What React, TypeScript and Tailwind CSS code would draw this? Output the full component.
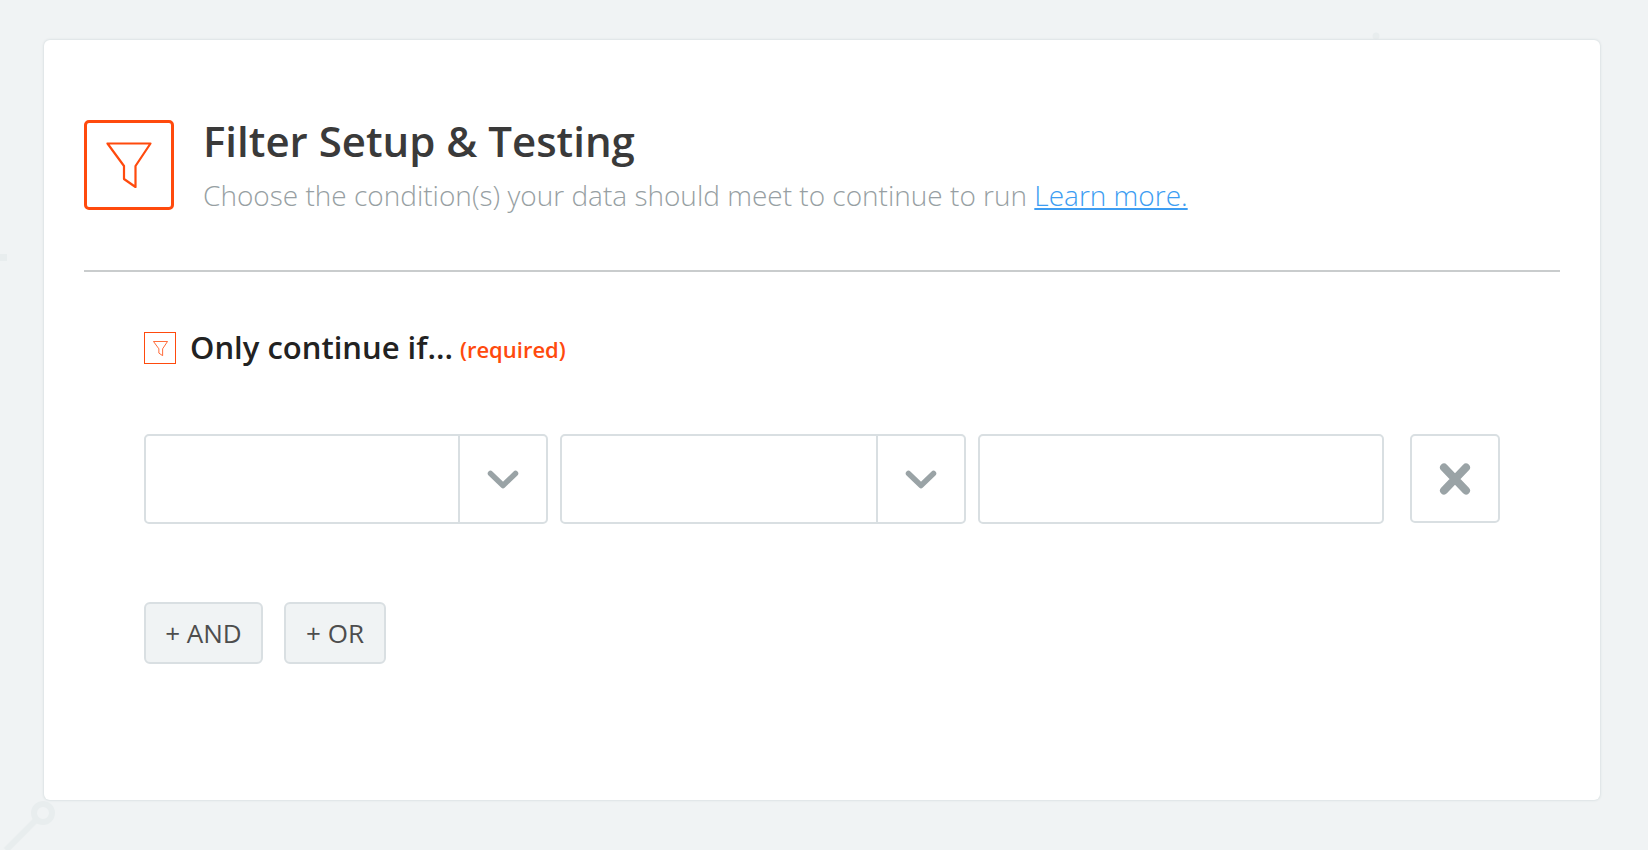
import * as React from 'react';

function FunnelIcon({ className, strokeWidth = 2 }: { className?: string; strokeWidth?: number }) {
    return (
        <svg viewBox="0 0 46 46" fill="none" className={className}>
            <path
                d="M1.5 1.5H44.5L29.5 24V45L18 37V24Z"
                stroke="currentColor"
                strokeWidth={strokeWidth}
                strokeLinejoin="round"
            />
        </svg>
    );
}

function SelectBox({ width }: { width: string }) {
    return (
        <div className={`flex h-[90px] rounded-[5px] border-2 border-[#d9dfe2] bg-white ${width}`}>
            <div className="flex-1 border-r-2 border-[#d9dfe2]" />
            <div className="flex w-[86px] items-center justify-center">
                <svg viewBox="0 0 32 20" fill="none" className="mt-0.5 h-[20px] w-[32px] text-[#9aa3a6]">
                    <path d="M3.5 3.5L16 15.5L28.5 3.5" stroke="currentColor" strokeWidth="5.5" strokeLinecap="round" strokeLinejoin="round" />
                </svg>
            </div>
        </div>
    );
}

function AddButton({ label, width }: { label: string; width: string }) {
    return (
        <button className={`h-[62px] rounded-[6px] border-2 border-[#d9dfe2] bg-[#f0f3f4] text-[26px] text-[#4d4d4d] ${width}`}>
            {label}
        </button>
    );
}

export default function App() {
    return (
        <div className="relative h-[850px] overflow-hidden bg-[#f0f3f4] pl-[44px] pt-[40px] font-['Open_Sans',sans-serif]">
            {/* faint bits of the canvas behind the card */}
            <svg viewBox="0 0 1648 850" fill="none" className="absolute left-0 top-0 h-[850px] w-[1648px]">
                <circle cx="43" cy="813" r="9" stroke="#e8edee" strokeWidth="6" />
                <path d="M36 820L6 850" stroke="#e8edee" strokeWidth="6" />
                <rect x="0" y="254" width="7" height="7" fill="#e8edee" />
                <circle cx="1376" cy="36" r="3.5" fill="#e8edee" />
            </svg>

            <div className="relative h-[760px] w-[1556px] rounded-[6px] bg-white px-[40px] shadow-[0_0_2px_1px_#dde3e5]">
                <div className="flex h-[170px] pt-[80px]">
                    <div className="flex h-[90px] w-[90px] shrink-0 items-center justify-center rounded-[5px] border-[3px] border-[#ff4a0d] text-[#ff4a0d]">
                        <FunnelIcon className="h-[46px] w-[46px]" strokeWidth={2.2} />
                    </div>
                    <div className="ml-[29px]">
                        <h1 className="-mt-[3px] text-[42px] leading-[48px] font-semibold text-[#3a3a3a]">Filter Setup &amp; Testing</h1>
                        <p className="mt-[12px] text-[28px] leading-[36px] font-light text-[#979fa3]">
                            Choose the condition(s) your data should meet to continue to run{' '}
                            <a href="#" className="text-[#3d9df2] underline">Learn more.</a>
                        </p>
                    </div>
                </div>

                <div className="mt-[60px] h-0.5 w-[1476px] bg-[#c9cccd]" />

                <div className="pl-[60px]">
                    <div className="mt-[56px] flex h-[40px] items-center">
                        <div className="flex h-[32px] w-[32px] items-center justify-center border border-[#ff4a0d] text-[#ff4a0d]">
                            <FunnelIcon className="h-[15px] w-[15px]" strokeWidth={2.5} />
                        </div>
                        <span className="ml-[14px] -mt-[3px] text-[31px] leading-[40px] font-semibold text-[#222]">Only continue if...</span>
                        <span className="ml-[7px] mt-[2px] text-[22px] leading-[40px] font-semibold text-[#ff4a0d]">(required)</span>
                    </div>

                    <div className="mt-[66px] flex items-start">
                        <SelectBox width="w-[404px]" />
                        <div className="ml-[12px]">
                            <SelectBox width="w-[406px]" />
                        </div>
                        <div className="ml-[12px] h-[90px] w-[406px] rounded-[5px] border-2 border-[#d9dfe2] bg-white" />
                        <button className="ml-[26px] flex h-[89px] w-[90px] items-center justify-center rounded-[5px] border-2 border-[#d9dfe2] bg-white text-[#9aa3a6]">
                            <svg viewBox="0 0 32 32" fill="none" className="h-[32px] w-[32px]">
                                <path d="M5 4.5L27 27.5M27 4.5L5 27.5" stroke="currentColor" strokeWidth="8" strokeLinecap="round" />
                            </svg>
                        </button>
                    </div>

                    <div className="mt-[78px] flex gap-[21px]">
                        <AddButton label="+ AND" width="w-[119px]" />
                        <AddButton label="+ OR" width="w-[102px]" />
                    </div>
                </div>
            </div>
        </div>
    );
}
